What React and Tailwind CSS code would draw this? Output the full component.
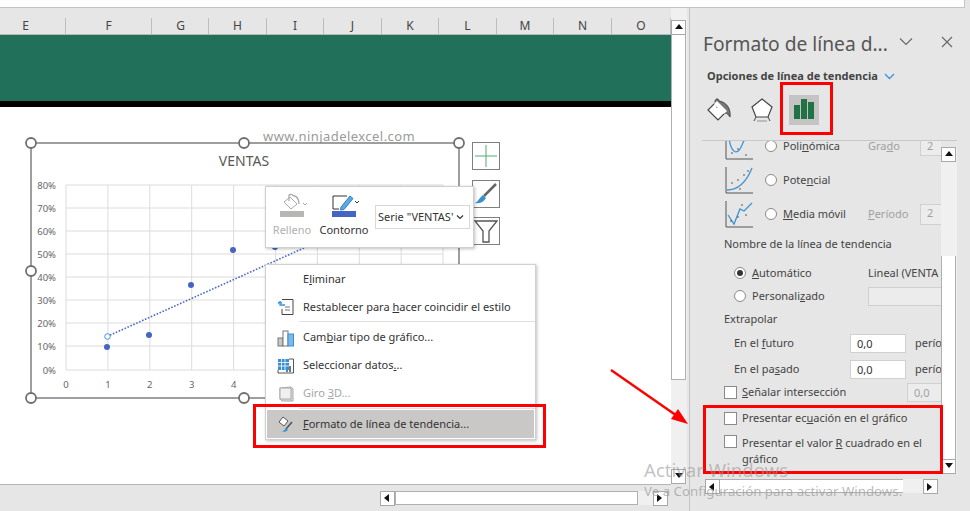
import React from "react";

const columns = [
  { name: "E", w: 66, pad: "pr-[14px]" },
  { name: "F", w: 86, pad: "" },
  { name: "G", w: 57, pad: "pl-[1px]" },
  { name: "H", w: 58, pad: "" },
  { name: "I", w: 57, pad: "" },
  { name: "J", w: 58, pad: "" },
  { name: "K", w: 57, pad: "" },
  { name: "L", w: 58, pad: "" },
  { name: "M", w: 57, pad: "" },
  { name: "N", w: 58, pad: "" },
  { name: "O", w: 59, pad: "" },
];

const Arrow = ({ dir }) => {
  const points = {
    up: "0,5 4,0 8,5",
    down: "0,0 4,5 8,0",
    left: "5,0 0,4 5,8",
    right: "0,0 5,4 0,8",
  };
  return (
    <svg width="8" height="8" viewBox="0 0 8 8">
      <polygon points={points[dir]} fill="#111" />
    </svg>
  );
};

const ScrollButton = ({ dir }) => (
  <div className="w-[15px] h-[15px] shrink-0 bg-white border border-[#a8a8a8] flex items-center justify-center">
    <Arrow dir={dir} />
  </div>
);

const Radio = ({ checked }) => (
  <span className="w-[12px] h-[12px] shrink-0 rounded-full bg-white border border-[#8a8a8a] flex items-center justify-center">
    {checked && <span className="w-[6px] h-[6px] rounded-full bg-[#333]"></span>}
  </span>
);

const Check = () => (
  <span className="w-[13px] h-[13px] shrink-0 bg-white border border-[#8a8a8a]"></span>
);

const TrendIcon = ({ children }) => (
  <svg width="30" height="30" viewBox="0 0 30 30" className="shrink-0">
    <path d="M2 2V28H29" fill="none" stroke="#555" strokeWidth="1" />
    {children}
  </svg>
);

const Dots = ({ list }) =>
  list.map(([x, y]) => <circle key={x + "-" + y} cx={x} cy={y} r="0.8" fill="#444" />);

const Chart = () => {
  const xs = [66, 107.9, 149.8, 191.7, 233.6, 275.5, 317.4, 359.3, 401.2, 443];
  const ys = [185, 208, 231, 254, 277, 300, 323, 346, 370];
  const labels = ["80%", "70%", "60%", "50%", "40%", "30%", "20%", "10%", "0%"];
  const handles = [
    [31, 143],
    [244, 143],
    [459, 143],
    [31, 271],
    [31, 398],
    [244, 398],
    [459, 398],
  ];
  return (
    <svg
      className="absolute left-[24px] top-[135px]"
      width="444"
      height="270"
      viewBox="24 135 444 270"
      fontFamily="'Noto Sans', sans-serif"
    >
      <rect x="31" y="143" width="428" height="255" fill="#fff" stroke="#7f7f7f" strokeWidth="1.5" />
      {xs.map((x) => (
        <line key={x} x1={x} x2={x} y1="185" y2="370" stroke="#dcdcdc" />
      ))}
      {ys.map((y) => (
        <line key={y} x1="66" x2="443" y1={y} y2={y} stroke="#dcdcdc" />
      ))}
      {labels.map((l, i) => (
        <text key={l} x="56" y={ys[i] + 3.5} textAnchor="end" fontSize="9.5" fill="#666">
          {l}
        </text>
      ))}
      {[0, 1, 2, 3, 4].map((n) => (
        <text key={n} x={xs[n]} y="388" textAnchor="middle" fontSize="9.5" fill="#666">
          {n}
        </text>
      ))}
      <text x="244" y="166" textAnchor="middle" fontSize="14" fill="#595959">
        VENTAS
      </text>
      <line x1="107" y1="336.5" x2="305" y2="247.5" stroke="#4a69c6" strokeWidth="1.6" strokeDasharray="1.6 1.6" />
      {[
        [107, 347],
        [149, 335],
        [191, 285],
        [233, 250],
        [275, 247],
      ].map(([x, y]) => (
        <circle key={x} cx={x} cy={y} r="3" fill="#4564c4" />
      ))}
      <circle cx="107.5" cy="336.5" r="2.8" fill="#fff" stroke="#3a94d8" strokeWidth="1" />
      {handles.map(([x, y]) => (
        <circle key={x + "-" + y} cx={x} cy={y} r="5" fill="#fff" stroke="#6f6f6f" strokeWidth="1.8" />
      ))}
    </svg>
  );
};

const SideButton = ({ children, top }) => (
  <div className={`absolute left-[472px] w-[28px] h-[28px] bg-white border border-[#7f7f7f] flex items-center justify-center ${top}`}>
    {children}
  </div>
);

const MenuItem = ({ icon, children, disabled, active, h }) => (
  <div
    className={`flex items-center mx-[1px] ${h} ${active ? "bg-[#c9c8c7]" : ""} ${
      disabled ? "text-[#a6a6a6]" : "text-[#333]"
    }`}
  >
    <span className="w-[36px] pl-[10px] flex shrink-0">{icon}</span>
    <span className="whitespace-nowrap">{children}</span>
  </div>
);

const ContextMenu = () => (
  <div className="absolute left-[265px] top-[264px] w-[271px] h-[176px] bg-white border border-[#d0d0d0] shadow-[1px_1px_3px_rgba(0,0,0,0.25)] text-[11px] flex flex-col font-['Noto_Sans',sans-serif]">
    <MenuItem h="h-[28px]">
      E<u>l</u>iminar
    </MenuItem>
    <MenuItem
      h="h-[28px]"
      icon={
        <svg width="18" height="18" viewBox="0 0 18 18">
          <path d="M5 1.5H16V16.5H5V11" fill="#fff" stroke="#444" />
          <path d="M8 9H13M8 12H13" stroke="#777" />
          <path d="M8 7H3V3.5M3 3.5L1 5.5M3 3.5L5 5.5" fill="none" stroke="#3a94d8" strokeWidth="1.3" />
        </svg>
      }
    >
      Restablecer para <u>h</u>acer coincidir el estilo
    </MenuItem>
    <div className="h-[1px] bg-[#e0e0e0] ml-[33px] mb-[1px]"></div>
    <MenuItem
      h="h-[29px]"
      icon={
        <svg width="18" height="18" viewBox="0 0 18 18">
          <rect x="1" y="9" width="5" height="8" fill="#c8c8c8" stroke="#777" />
          <rect x="6" y="2" width="5" height="15" fill="#fff" stroke="#777" />
          <rect x="11" y="5" width="5.5" height="12" fill="#7db9e8" stroke="#3a8fd0" />
        </svg>
      }
    >
      Cam<u>b</u>iar tipo de gráfico...
    </MenuItem>
    <MenuItem
      h="h-[27px]"
      icon={
        <svg width="18" height="18" viewBox="0 0 18 18">
          <rect x="1" y="2" width="11" height="11" fill="#3a8fd0" />
          <path d="M1 5.5H12M1 9H12M4.5 2V13M8 2V13" stroke="#fff" strokeWidth="0.8" />
          <path d="M12 2H16.5V16H1V13" fill="none" stroke="#555" />
          <rect x="12" y="9" width="2" height="6" fill="#777" />
          <rect x="9" y="11" width="2" height="4" fill="#3a8fd0" />
        </svg>
      }
    >
      Seleccionar datos<u>.</u>..
    </MenuItem>
    <MenuItem
      h="h-[29px]"
      disabled
      icon={
        <svg width="18" height="18" viewBox="0 0 18 18">
          <path d="M3 3L14 2L16 4V16L5 16L3 14Z" fill="#ddd" stroke="#aaa" />
          <rect x="3" y="3" width="11" height="11" fill="#f0f0f0" stroke="#aaa" />
        </svg>
      }
    >
      Giro <u>3</u>D...
    </MenuItem>
    <div className="h-[1px] bg-[#e0e0e0] ml-[33px] mb-[1px]"></div>
    <MenuItem
      h="h-[28px]"
      active
      icon={
        <svg width="18" height="18" viewBox="0 0 18 18">
          <path d="M6 2L11 6L7 11L2 7Z" fill="#fff" stroke="#555" />
          <path d="M15 7L9 14" stroke="#555" strokeWidth="1.6" />
          <path d="M9 13L11 15C9 17 6 17 5 16.5C7 16 7.5 14.5 9 13Z" fill="#3a8fd0" />
        </svg>
      }
    >
      <u>F</u>ormato de línea de tendencia...
    </MenuItem>
  </div>
);

const MiniToolbar = () => (
  <div className="absolute left-[265px] top-[186px] w-[209px] h-[62px] bg-white border border-[#d0d0d0] shadow-[1px_1px_3px_rgba(0,0,0,0.25)] flex text-[11px] font-['Noto_Sans',sans-serif]">
    <div className="w-[52px] flex flex-col items-center text-[#b0b0b0]">
      <svg width="34" height="26" viewBox="0 0 34 26" className="mt-[6px]">
        <path d="M9 9L15 4L22 11L16 16Z" fill="#fff" stroke="#aaa" />
        <path d="M14 8V2.5C14 1 18 1 18 2.5C21 3 24 5 24 11" fill="none" stroke="#aaa" strokeWidth="1.3" />
        <path d="M28 10L30 12L32 10" fill="none" stroke="#aaa" />
        <rect x="5" y="18" width="24" height="6" fill="#b8b6b2" />
      </svg>
      <span className="mt-[3px]">Relleno</span>
    </div>
    <div className="w-[52px] flex flex-col items-center text-[#333]">
      <svg width="34" height="26" viewBox="0 0 34 26" className="mt-[6px]">
        <path d="M20 3H6V16H12" fill="none" stroke="#333" />
        <path d="M14 14L23 3L26 5.5L17 16.5L13.5 17Z" fill="#5da9e6" stroke="#2f7fc0" />
        <path d="M28 8L30 10L32 8" fill="none" stroke="#333" />
        <rect x="5" y="18" width="24" height="6" fill="#4564c4" />
      </svg>
      <span className="mt-[3px]">Contorno</span>
    </div>
    <div className="ml-[5px] mt-[18px] w-[95px] h-[24px] border border-[#d8d8d8] flex items-center pl-[2px] text-[#333] whitespace-nowrap overflow-hidden">
      <span>Serie "VENTAS'</span>
      <svg width="8" height="6" viewBox="0 0 8 6" className="ml-[3px] shrink-0">
        <path d="M1 1.5L4 4.5L7 1.5" fill="none" stroke="#333" strokeWidth="1.2" />
      </svg>
    </div>
  </div>
);

const Panel = () => (
  <div className="w-[281px] h-full bg-[#e6e6e6] border-l border-[#c4c4c4] pl-[12px] flex flex-col text-[11px] text-[#444] font-['Noto_Sans',sans-serif]">
    <div className="mt-[20px] h-[32px] flex items-center pl-[1px]">
      <span className="text-[19.2px] text-[#555] whitespace-nowrap w-[200px]">Formato de línea d...</span>
      <svg width="14" height="10" viewBox="0 0 14 10" className="ml-[-4px] -mt-[5px]">
        <path d="M1 1.5L7 7.5L13 1.5" fill="none" stroke="#666" strokeWidth="1.1" />
      </svg>
      <svg width="12" height="12" viewBox="0 0 12 12" className="ml-[28px] -mt-[5px]">
        <path d="M1 1L11 11M11 1L1 11" stroke="#666" strokeWidth="1.1" />
      </svg>
    </div>
    <div className="mt-[4px] h-[24px] pl-[5px] flex items-center font-bold text-[#444]">
      <span className="whitespace-nowrap">Opciones de línea de tendencia</span>
      <svg width="11" height="7" viewBox="0 0 11 7" className="ml-[6px]">
        <path d="M1 1L5.5 5.5L10 1" fill="none" stroke="#3a94d8" strokeWidth="1.3" />
      </svg>
    </div>
    <div className="mt-[7px] h-[30px] flex items-center">
      <svg width="26" height="26" viewBox="0 0 26 26" className="ml-[4px]">
        <path d="M11 4L21 14L12 23L2 13Z" fill="#fff" stroke="#444" strokeWidth="1.2" />
        <path d="M11 4V11" stroke="#444" />
        <path d="M9 5C9 1 13 1 13 4C20 5 25 11 24 20C22 17 21 16 19 16" fill="#777" stroke="#444" />
        <path d="M11 4L21 14L18 17L8 7Z" fill="#fff" />
      </svg>
      <svg width="24" height="26" viewBox="0 0 24 26" className="ml-[18px]">
        <path d="M12 2L22 10L18 20H6L2 10Z" fill="#fff" stroke="#444" strokeWidth="1.2" />
        <path d="M7 24H17" stroke="#bbb" strokeWidth="2" />
        <path d="M6 20L4 24M18 20L20 24" stroke="#444" />
      </svg>
      <div className="ml-[15px] w-[30px] h-[30px] bg-[#c4c4c4] flex items-end justify-center gap-[1px] pb-[6px]">
        <span className="w-[6px] h-[14px] bg-[#217346]"></span>
        <span className="w-[6px] h-[20px] bg-[#217346]"></span>
        <span className="w-[6px] h-[17px] bg-[#217346]"></span>
      </div>
    </div>
    <div className="mt-[15px] h-[1px] w-[255px] bg-[#c8c8c8]"></div>
    <div className="flex h-[333px]">
      <div className="w-[239px] overflow-hidden pl-[22px]">
        <div className="-mt-[12px] h-[34px] flex items-center">
          <TrendIcon>
            <path d="M5 8C8 24 14 24 18 14C20 8 22 8 24 4" fill="none" stroke="#3a94d8" strokeWidth="1.3" />
            <Dots list={[[8, 22], [14, 18], [22, 24]]} />
          </TrendIcon>
          <span className="ml-[11px]"><Radio /></span>
          <span className="ml-[6px] w-[85px] shrink-0">Poli<u>n</u>ómica</span>
          <span className="text-[#a0a0a0] w-[52px] shrink-0">Gra<u>d</u>o</span>
          <span className="w-[22px] h-[19px] bg-[#ececec] border border-[#d0d0d0] text-[#a0a0a0] pl-[6px] shrink-0">2</span>
        </div>
        <div className="h-[34px] flex items-center">
          <TrendIcon>
            <path d="M3 25C14 25 22 18 28 3" fill="none" stroke="#3a94d8" strokeWidth="1.3" />
            <Dots list={[[8, 18], [14, 15], [20, 10], [24, 6], [16, 24]]} />
          </TrendIcon>
          <span className="ml-[11px]"><Radio /></span>
          <span className="ml-[6px]">Pote<u>n</u>cial</span>
        </div>
        <div className="h-[34px] flex items-center">
          <TrendIcon>
            <path d="M4 16L10 25L16 10L20 12L28 4" fill="none" stroke="#3a94d8" strokeWidth="1.3" />
            <Dots list={[[7, 22], [14, 18], [18, 6], [22, 16]]} />
          </TrendIcon>
          <span className="ml-[11px]"><Radio /></span>
          <span className="ml-[6px] w-[85px] shrink-0"><u>M</u>edia móvil</span>
          <span className="text-[#a0a0a0] w-[52px] shrink-0"><u>P</u>eríodo</span>
          <span className="w-[22px] h-[21px] bg-[#ececec] border border-[#d0d0d0] text-[#a0a0a0] pl-[6px] shrink-0">2</span>
        </div>
        <div className="h-[26px] flex items-center whitespace-nowrap">Nombre de la línea de tendencia</div>
        <div className="mt-[4px] h-[24px] flex items-center pl-[10px] whitespace-nowrap">
          <Radio checked />
          <span className="ml-[6px] w-[116px] shrink-0"><u>A</u>utomático</span>
          <span>Lineal (VENTA</span>
        </div>
        <div className="h-[22px] flex items-center pl-[10px] whitespace-nowrap">
          <Radio />
          <span className="ml-[6px] w-[116px] shrink-0">Personali<u>z</u>ado</span>
          <span className="w-[80px] h-[19px] bg-[#ececec] border border-[#d0d0d0] shrink-0"></span>
        </div>
        <div className="mt-[1px] h-[22px] flex items-center">Extrapolar</div>
        <div className="h-[26px] flex items-center pl-[10px] whitespace-nowrap">
          <span className="w-[116px] shrink-0">En el <u>f</u>uturo</span>
          <span className="w-[56px] h-[19px] bg-white border border-[#d0d0d0] pl-[6px] leading-[17px] text-[#333] shrink-0">0,0</span>
          <span className="ml-[9px]">perío</span>
        </div>
        <div className="h-[26px] flex items-center pl-[10px] whitespace-nowrap">
          <span className="w-[116px] shrink-0">En el pa<u>s</u>ado</span>
          <span className="w-[56px] h-[19px] bg-white border border-[#d0d0d0] pl-[6px] leading-[17px] text-[#333] shrink-0">0,0</span>
          <span className="ml-[9px]">perío</span>
        </div>
        <div className="h-[21px] flex items-center whitespace-nowrap">
          <Check />
          <span className="ml-[5px] w-[165px] shrink-0"><u>S</u>eñalar intersección</span>
          <span className="w-[36px] h-[19px] bg-[#ececec] border border-[#d0d0d0] text-[#a0a0a0] pl-[6px] leading-[17px] shrink-0">0,0</span>
        </div>
        <div className="mt-[2px] h-[26px] flex items-center whitespace-nowrap">
          <Check />
          <span className="ml-[5px]">Presentar ec<u>u</u>ación en el gráfico</span>
        </div>
        <div className="mt-[4px] flex items-start leading-[16px]">
          <Check />
          <span className="ml-[5px] w-[190px]">Presentar el valor <u>R</u> cuadrado en el gráfico</span>
        </div>
      </div>
      <div className="w-[16px] mt-[6px] flex flex-col bg-[#f0f0f0]">
        <ScrollButton dir="up" />
        <div className="h-[94px]"></div>
        <div className="flex-1 w-[15px] bg-white border-x border-[#b0b0b0]"></div>
        <ScrollButton dir="down" />
      </div>
    </div>
    <div className="mt-[5px] ml-[3px] w-[233px] h-[14px] flex bg-[#f0f0f0]">
      <ScrollButton dir="left" />
      <div className="w-[183px] bg-white border-y border-[#b0b0b0]"></div>
      <div className="flex-1"></div>
      <ScrollButton dir="right" />
    </div>
  </div>
);

export default function App() {
  return (
    <div className="relative w-[970px] h-[511px] overflow-hidden bg-[#e6e6e6] flex flex-col font-['Noto_Sans',sans-serif]">
      <div className="h-[8px] w-[965px] bg-white border-b border-r border-[#c4c4c4] shrink-0"></div>
      <div className="flex flex-1 min-h-0">
        <div className="w-[671px] flex flex-col">
          <div className="h-[27px] flex items-end bg-[#e6e6e6] border-b border-[#b8b8b8] shrink-0">
            {columns.map((c) => (
              <div
                key={c.name}
                style={{ width: c.w }}
                className={`h-[16px] flex items-center justify-center text-[12px] text-[#444] pb-[1px] border-r border-[#bdbdbd] ${c.pad}`}
              >
                {c.name}
              </div>
            ))}
          </div>
          <div className="h-[66px] bg-[#217059] shrink-0"></div>
          <div className="h-[6px] bg-black shrink-0"></div>
          <div className="flex-1 bg-white"></div>
          <div className="h-[27px] bg-[#e6e6e6] border-t border-[#b5b5b5] flex items-center pl-[380px] shrink-0">
            <ScrollButton dir="left" />
            <div className="w-[243px] h-[14px] bg-white border border-[#b0b0b0]"></div>
            <div className="w-[15px] h-[14px] bg-[#f0f0f0]"></div>
            <ScrollButton dir="right" />
          </div>
        </div>
        <div className="w-[16px] pt-[12px] flex flex-col bg-[#f0f0f0]">
          <ScrollButton dir="up" />
          <div className="h-[345px] w-[15px] bg-white border-x border-b border-[#b0b0b0]"></div>
          <div className="flex-1"></div>
          <ScrollButton dir="down" />
          <div className="h-[27px] bg-[#e6e6e6]"></div>
        </div>
        <div className="w-[2px]"></div>
        <Panel />
      </div>

      <span className="absolute left-[263px] top-[127px] text-[13px] tracking-[0.45px] text-[#9a9a9a] whitespace-nowrap">
        www.ninjadelexcel.com
      </span>
      <Chart />
      <SideButton top="top-[142px]">
        <svg width="22" height="22" viewBox="0 0 22 22">
          <path d="M11 0V22M0 11H22" stroke="#4caf6e" strokeWidth="1" />
        </svg>
      </SideButton>
      <SideButton top="top-[180px]">
        <svg width="24" height="24" viewBox="0 0 24 24">
          <path d="M22 2L10 14" stroke="#666" strokeWidth="2.5" />
          <path d="M9 13L12 16C9 21 4 22 1 21C4 20 5 16 9 13Z" fill="#3a8fd0" />
        </svg>
      </SideButton>
      <SideButton top="top-[217px]">
        <svg width="24" height="24" viewBox="0 0 24 24">
          <path d="M1 2H23L15 12V23H9V12Z" fill="#fff" stroke="#555" strokeWidth="1.3" />
        </svg>
      </SideButton>
      <MiniToolbar />
      <ContextMenu />

      <div className="absolute left-[253px] top-[404px] w-[293px] h-[44px] border-[3px] border-[#ff0000]"></div>
      <div className="absolute left-[780px] top-[82px] w-[53px] h-[53px] border-[3px] border-[#ff0000]"></div>
      <div className="absolute left-[703px] top-[405px] w-[240px] h-[69px] border-[3px] border-[#ff0000]"></div>
      <svg className="absolute left-[605px] top-[365px]" width="90" height="70" viewBox="0 0 90 70">
        <path d="M6 5L75 53" stroke="#ff0000" strokeWidth="2.5" />
        <path d="M83 59L66 54L73 44Z" fill="#ff0000" />
      </svg>

      <span className="absolute left-[644px] top-[456px] text-[18.6px] text-[#9a9a9a]/60 whitespace-nowrap">
        Activar Windows
      </span>
      <span className="absolute left-[644px] top-[482px] text-[13.3px] text-[#9a9a9a]/70 whitespace-nowrap">
        Ve a Configuración para activar Windows.
      </span>
    </div>
  );
}
